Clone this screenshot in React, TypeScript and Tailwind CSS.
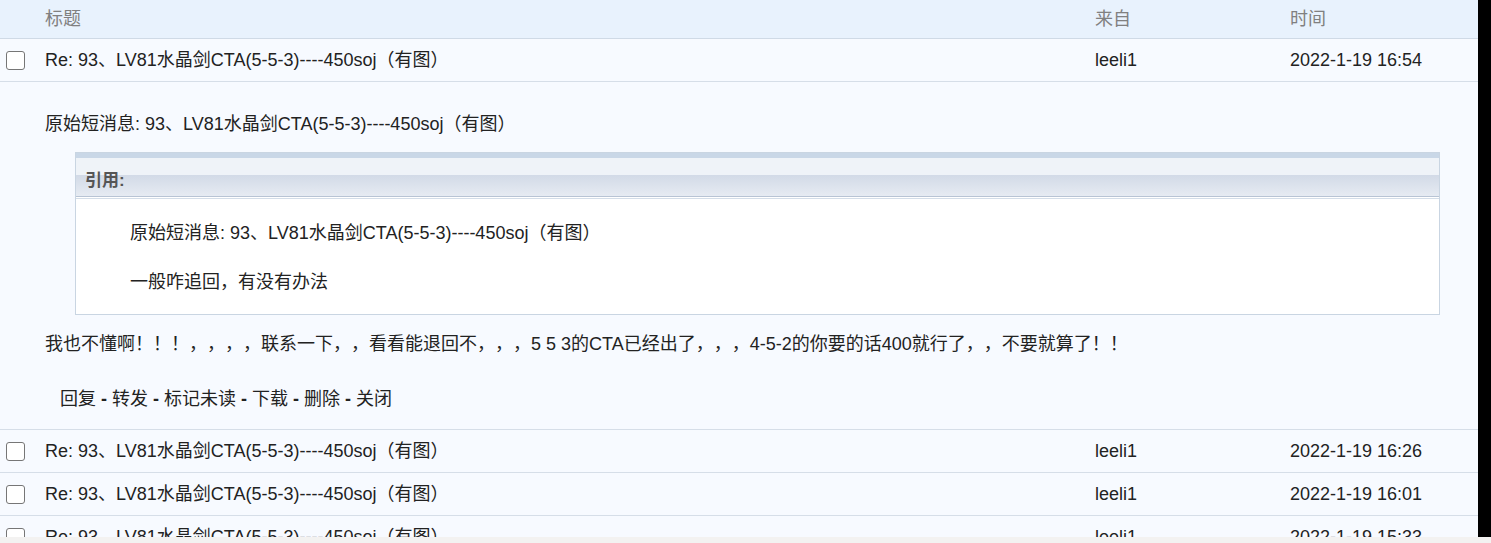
import React from "react";

const TITLE = "Re: 93、LV81水晶剑CTA(5-5-3)----450soj（有图）";

type Msg = { from: string; time: string };

const below: Msg[] = [
  { from: "leeli1", time: "2022-1-19 16:26" },
  { from: "leeli1", time: "2022-1-19 16:01" },
  { from: "leeli1", time: "2022-1-19 15:33" },
];

const Check = () => (
  <span className="block w-[19px] h-[19px] rounded-[3px] border border-[#767676] bg-white" />
);

const Row = ({ from, time }: Msg) => (
  <div className="flex items-center h-[43px] shrink-0 border-b border-[#d6dee8] bg-[#f7faff] text-[#222]">
    <div className="w-[45px] pl-[6px] shrink-0">
      <Check />
    </div>
    <div className="w-[1050px] shrink-0">{TITLE}</div>
    <div className="w-[195px] shrink-0">{from}</div>
    <div>{time}</div>
  </div>
);

const Quote = () => (
  <div className="mt-[14px] ml-[30px] border border-[#c9d5e2] bg-white">
    <div className="h-[5px] bg-[#c9d7e7]" />
    <div className="h-[17px] bg-[#eff3f8]" />
    <div className="h-[22px] flex items-center pl-[9px] bg-gradient-to-b from-[#d2dae7] to-[#e6ebf2] border-b border-[#b8c4d4] text-[17px] font-bold text-[#555]">
      <span className="-mt-[10px]">引用:</span>
    </div>
    <div className="h-[2px] bg-white border-b border-[#d3dde8]" />
    <div className="pl-[54px] pt-[21px] pb-[18px] text-[#222]">
      <p>原始短消息: 93、LV81水晶剑CTA(5-5-3)----450soj（有图）</p>
      <p className="mt-[22px]">一般咋追回，有没有办法</p>
    </div>
  </div>
);

export default function App() {
  return (
    <div className="w-[1491px] h-[543px] overflow-hidden flex flex-col font-['Liberation_Sans','Noto_Sans_CJK_SC',sans-serif] text-[18px] leading-[27px] [text-spacing-trim:space-all]">
      <div className="flex flex-1 min-h-0">
        <div className="w-[1478px] shrink-0 flex flex-col overflow-hidden bg-[#f7faff]">
          <div className="flex items-center h-[39px] shrink-0 bg-[#e8f2fd] border-b border-[#cfdae6] text-[#808080]">
            <div className="w-[45px] shrink-0" />
            <div className="w-[1050px] shrink-0">标题</div>
            <div className="w-[195px] shrink-0">来自</div>
            <div>时间</div>
          </div>

          <Row from="leeli1" time="2022-1-19 16:54" />

          <div className="shrink-0 pl-[45px] pr-[38px] pt-[29px] pb-[16px] border-b border-[#d6dee8] text-[#222]">
            <p>原始短消息: 93、LV81水晶剑CTA(5-5-3)----450soj（有图）</p>
            <Quote />
            <p className="mt-[16px]">
              我也不懂啊！！！，，，，联系一下，，看看能退回不，，，5 5 3的CTA已经出了，，，4-5-2的你要的话400就行了，，不要就算了！！
            </p>
            <p className="mt-[28px] pl-[15px]">
              回复 <b>-</b> 转发 <b>-</b> 标记未读 <b>-</b> 下载 <b>-</b> 删除 <b>-</b> 关闭
            </p>
          </div>

          {below.map((m) => (
            <Row key={m.time} {...m} />
          ))}
        </div>
        <div className="flex-1 bg-black" />
      </div>
      <div className="h-[6px] shrink-0 bg-[#f3f2f1]" />
    </div>
  );
}
